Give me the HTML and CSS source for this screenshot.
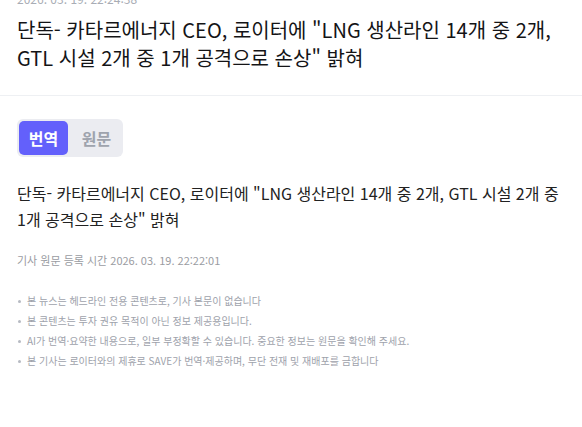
FILE: index.html
```html
<!DOCTYPE html>
<html lang="ko">
<head>
<meta charset="utf-8">
<link rel="stylesheet" href="styles.css">
</head>
<body>
<div class="page">
  <header class="head">
    <div class="date">2026. 03. 19. 22:24:38</div>
    <h1 class="title">단독- 카타르에너지 CEO, 로이터에 "LNG 생산라인 14개 중 2개, GTL 시설 2개 중 1개 공격으로 손상" 밝혀</h1>
  </header>
  <section class="body">
    <div class="tabs">
      <button class="tab active">번역</button>
      <button class="tab">원문</button>
    </div>
    <p class="text">단독- 카타르에너지 CEO, 로이터에 "LNG 생산라인 14개 중 2개, GTL 시설 2개 중 1개 공격으로 손상" 밝혀</p>
    <p class="meta">기사 원문 등록 시간 2026. 03. 19. 22:22:01</p>
    <ul class="notes">
      <li>본 뉴스는 헤드라인 전용 콘텐츠로, 기사 본문이 없습니다</li>
      <li>본 콘텐츠는 투자 권유 목적이 아닌 정보 제공용입니다.</li>
      <li>AI가 번역·요약한 내용으로, 일부 부정확할 수 있습니다. 중요한 정보는 원문을 확인해 주세요.</li>
      <li>본 기사는 로이터와의 제휴로 SAVE가 번역·제공하며, 무단 전재 및 재배포를 금합니다</li>
    </ul>
  </section>
</div>
</body>
</html>
```

FILE: styles.css
```css
* { box-sizing: border-box; }
html, body { margin: 0; padding: 0; background: #fff; }
body {
  font-family: "Noto Sans CJK KR", "Noto Sans", sans-serif;
  color: #1f1f1f;
  overflow: hidden;
  word-break: keep-all;
}
.page { width: 582px; }
.head {
  padding: 0 17px 23px;
  border-bottom: 1px solid #eef0f3;
}
.date {
  margin-top: -9px;
  font-size: 12px;
  line-height: 16px;
  color: #a9adb5;
}
.title {
  margin: 9px 0 0;
  font-size: 20px;
  font-weight: 400;
  line-height: 28px;
  color: #141416;
}
.body { padding: 23px 17px 0; }
.tabs {
  display: inline-flex;
  gap: 4px;
  padding: 2px;
  background: #ebecf1;
  border-radius: 6px;
}
.tab {
  border: 0;
  margin: 0;
  width: 49px;
  height: 34px;
  padding: 0;
  border-radius: 5px;
  background: transparent;
  font-family: inherit;
  font-size: 16px;
  font-weight: 700;
  color: #9ea3ad;
}
.tab.active { background: #6360fb; color: #fff; }
.text {
  margin: 23px 0 0;
  font-size: 16px;
  line-height: 26px;
  color: #222;
}
.meta {
  margin: 19px 0 0;
  font-size: 11px;
  line-height: 18px;
  color: #9a9ca2;
}
.notes {
  list-style: none;
  margin: 22px 0 0;
  padding: 0;
}
.notes li {
  position: relative;
  padding-left: 10px;
  font-size: 10px;
  line-height: 20px;
  color: #9ea2ab;
}
.notes li::before {
  content: "";
  position: absolute;
  left: 1px;
  top: 9px;
  width: 3px;
  height: 3px;
  border-radius: 50%;
  background: #b6bac2;
}
```
